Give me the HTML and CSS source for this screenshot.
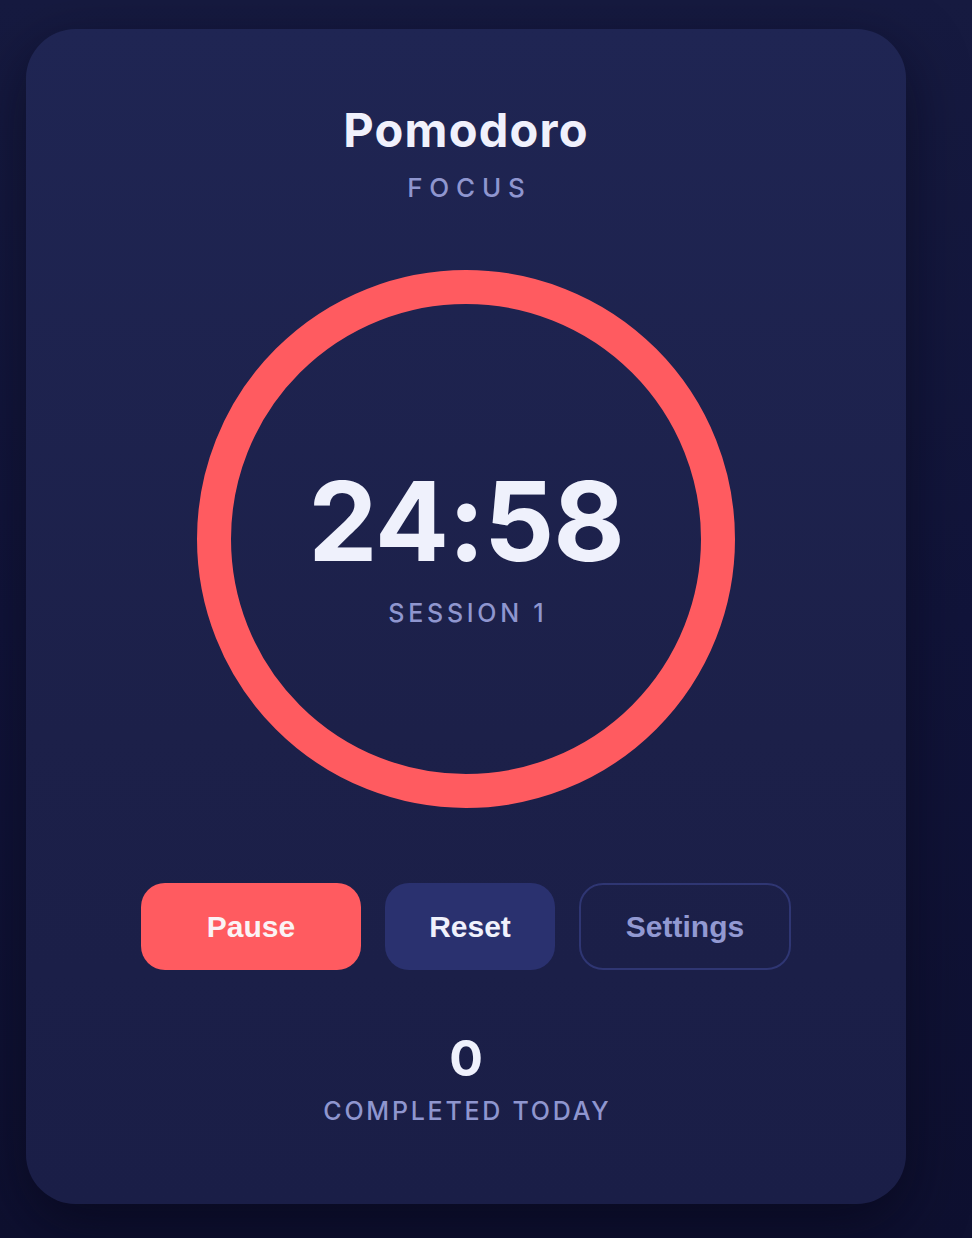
FILE: index.html
```html
<!DOCTYPE html>
<html lang="en">
<head>
<meta charset="utf-8">
<title>Pomodoro</title>
<link rel="stylesheet" href="styles.css">
</head>
<body>
<main class="card">
  <header class="head">
    <h1 class="title">Pomodoro</h1>
    <p class="mode">FOCUS</p>
  </header>

  <section class="timer">
    <svg class="ring" width="538" height="538" viewBox="0 0 538 538">
      <circle cx="269" cy="269" r="252" fill="none" stroke="#ff5b60" stroke-width="34"/>
    </svg>
    <div class="readout">
      <div class="time">24:58</div>
      <div class="session">SESSION 1</div>
    </div>
  </section>

  <div class="controls">
    <button class="btn btn-primary">Pause</button>
    <button class="btn btn-secondary">Reset</button>
    <button class="btn btn-ghost">Settings</button>
  </div>

  <section class="stats">
    <div class="count">0</div>
    <div class="count-label">COMPLETED TODAY</div>
  </section>
</main>
</body>
</html>
```

FILE: styles.css
```css
* { box-sizing: border-box; }

html, body { height: 100%; }

body {
  margin: 0;
  padding: 29px 66px 34px 26px;
  background: linear-gradient(180deg, #161a40 0%, #11143a 50%, #0e1030 100%);
  font-family: Inter, "Noto Sans", sans-serif;
  color: #eff1fc;
}

.card {
  width: 880px;
  height: 1175px;
  border-radius: 50px;
  background: linear-gradient(180deg, #1f2553 0%, #1c2049 60%, #1a1e47 100%);
  box-shadow: 0 20px 60px rgba(5, 6, 20, 0.55);
  display: flex;
  flex-direction: column;
  align-items: center;
  padding-top: 73px;
}

.head {
  display: flex;
  flex-direction: column;
  align-items: center;
}

.title {
  margin: 0;
  font-size: 47px;
  font-weight: 700;
  line-height: 56px;
  letter-spacing: 1.2px;
  color: #f0f1fc;
}

.mode {
  margin: 14px 0 0;
  font-size: 26px;
  line-height: 32px;
  font-weight: 500;
  letter-spacing: 0.26em;
  padding-left: 0.26em;
  color: #8f96cf;
}

.timer {
  position: relative;
  width: 538px;
  height: 538px;
  margin-top: 66px;
}

.ring { display: block; }

.readout {
  position: absolute;
  inset: 0;
  display: flex;
  flex-direction: column;
  align-items: center;
  justify-content: center;
  padding-top: 13px;
}

.time {
  font-size: 110px;
  font-weight: 700;
  line-height: 116px;
  letter-spacing: -1px;
  color: #eff1fc;
}

.session {
  margin-top: 19px;
  font-size: 25px;
  line-height: 30px;
  font-weight: 500;
  letter-spacing: 0.15em;
  padding-left: 0.15em;
  color: #8f96cf;
}

.controls {
  display: flex;
  gap: 24px;
  margin-top: 75px;
}

.btn {
  height: 87px;
  border-radius: 24px;
  border: 2px solid transparent;
  font-family: "Liberation Sans", Arial, sans-serif;
  font-size: 30px;
  font-weight: 700;
  cursor: pointer;
}

.btn-primary {
  width: 220px;
  background: #ff5b60;
  color: #fbf3f5;
}

.btn-secondary {
  width: 170px;
  background: #2a316f;
  color: #f0f1fc;
}

.btn-ghost {
  width: 212px;
  background: transparent;
  border-color: #2f3673;
  color: #9299d2;
}

.stats {
  margin-top: 58px;
  display: flex;
  flex-direction: column;
  align-items: center;
}

.count {
  font-size: 50px;
  font-weight: 700;
  line-height: 60px;
  color: #eff1fc;
}

.count-label {
  margin-top: 8px;
  font-size: 25px;
  line-height: 30px;
  font-weight: 500;
  letter-spacing: 0.11em;
  padding-left: 0.11em;
  color: #8f96cf;
}
```
